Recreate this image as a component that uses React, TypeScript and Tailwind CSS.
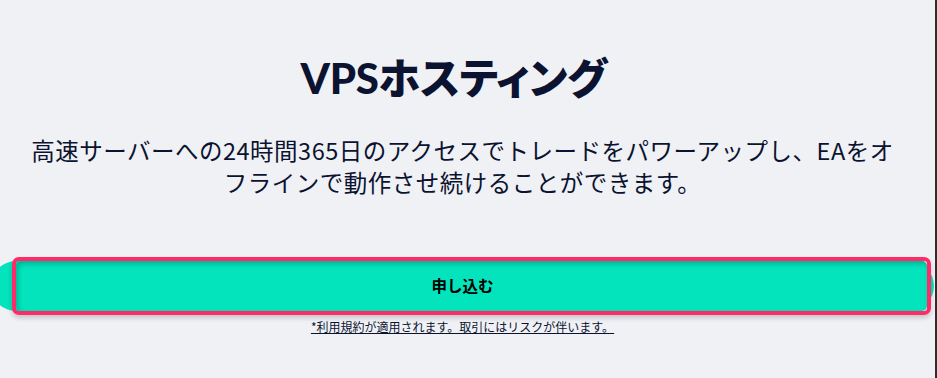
export default function App() {
  return (
    <div className="flex h-[378px] w-full overflow-hidden bg-[#f0f1f5]">
      <main className="flex flex-1 flex-col items-center pr-[10px] pt-[52px] font-['Lato','Noto_Sans_CJK_JP',sans-serif] text-[#0b1330]">
        <h1 className="mr-[18px] text-[42px] font-black leading-[52px] tracking-[-0.3px] [font-feature-settings:'palt']">
          VPSホスティング
        </h1>
        <p className="mt-[30px] w-[872px] text-center font-['Noto_Sans_CJK_JP',sans-serif] text-[23.5px] leading-[32px] tracking-[0.5px]">
          高速サーバーへの24時間365日のアクセスでトレードをパワーアップし、EAをオフラインで動作させ続けることができます。
        </p>
        <div className="relative mt-[59px] h-[58px] w-[935px] shrink-0 -mr-[10px]">
          <div className="absolute left-[-9px] right-[1px] top-[4px] h-[50px] rounded-full bg-[#03e3bc]" />
          <div className="absolute bottom-0 left-[12px] right-[4px] top-0 rounded-[7px] border-4 border-[#ff2a67] shadow-[0_3px_5px_rgba(0,0,0,0.18)]">
            <div className="h-full rounded-[5px] bg-[#03e3bc] shadow-[inset_2px_3px_5px_rgba(0,0,0,0.22)]" />
          </div>
          <span className="relative flex h-full items-center justify-center pr-[10px] font-['Noto_Sans_CJK_JP',sans-serif] text-[15.5px] font-bold text-black">
            申し込む
          </span>
        </div>
        <a className="mt-[4px] font-['Noto_Sans_CJK_JP',sans-serif] text-[12px] leading-[16px] text-[#0b1330] underline">
          *利用規約が適用されます。取引にはリスクが伴います。
        </a>
      </main>
      <div className="w-[2px] shrink-0 bg-[#2e2e2e]" />
    </div>
  )
}
